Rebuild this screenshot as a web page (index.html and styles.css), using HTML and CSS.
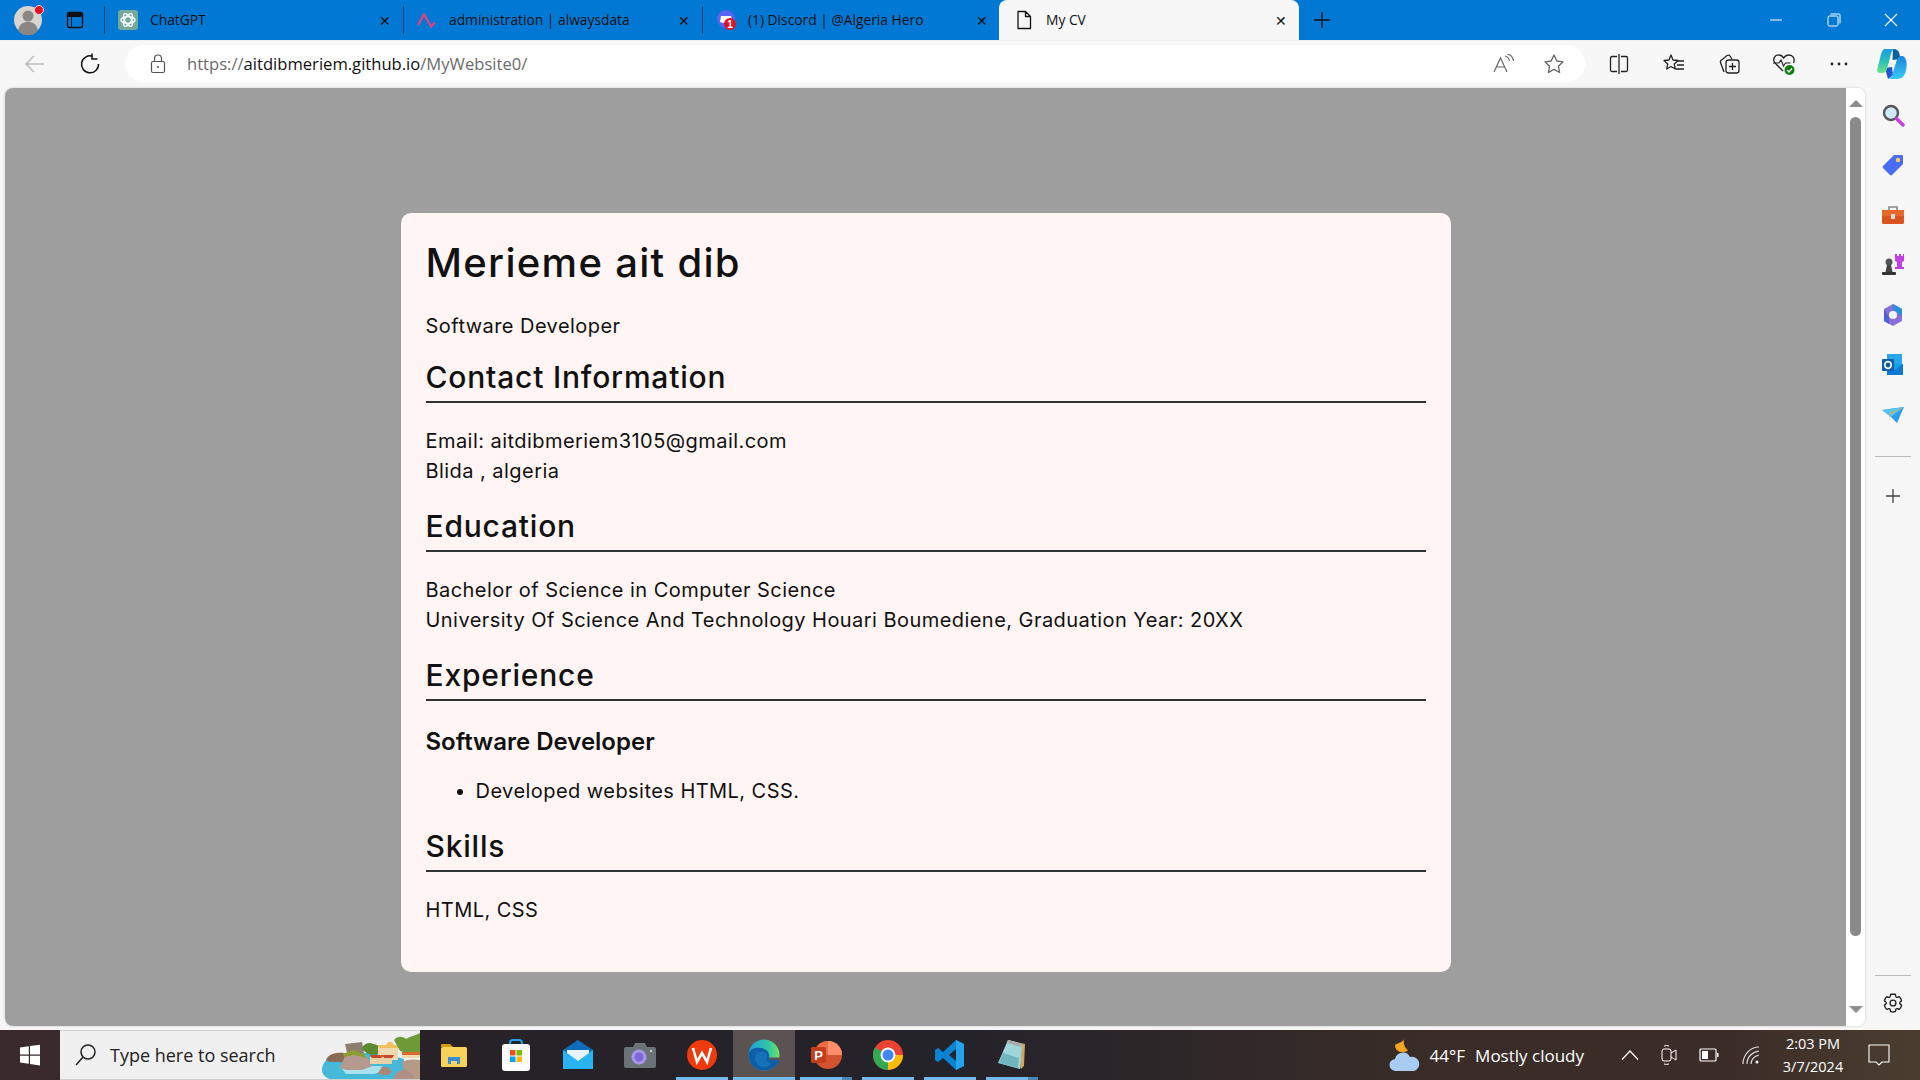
FILE: index.html
```html
<!DOCTYPE html>
<html lang="en">
<head>
  <meta charset="UTF-8" />
  <title>My CV</title>
  <link rel="stylesheet" href="styles.css">
</head>
<body>
  <div class="tabstrip">
    <div class="strip-start">
      <svg class="avatar" width="44" height="40" viewBox="0 0 44 40"><circle cx="28" cy="20" r="14" fill="#d8d4d0"/><circle cx="28" cy="16" r="5.5" fill="#8a8684"/><path d="M18 31c1-7 5-9 10-9s9 2 10 9a14 14 0 0 1-20 0z" fill="#8a8684"/><circle cx="39" cy="10" r="4.5" fill="#e81123" stroke="#f5d5d5"/></svg>
      <svg class="tabs-icon" width="20" height="20" viewBox="0 0 20 20"><rect x="2.5" y="2.5" width="15" height="15" rx="2" fill="none" stroke="#111" stroke-width="1.4"/><path d="M2.5 3h15v3.5h-15zM6.5 6v11" fill="#111" stroke="#111"/></svg>
    </div>
    <div class="tab">
      <svg width="20" height="20" viewBox="0 0 20 20"><rect width="20" height="20" rx="3" fill="#74aa9c"/><g fill="none" stroke="#fff" stroke-width="1.3"><ellipse cx="10" cy="10" rx="7" ry="3.4"/><ellipse cx="10" cy="10" rx="7" ry="3.4" transform="rotate(60 10 10)"/><ellipse cx="10" cy="10" rx="7" ry="3.4" transform="rotate(120 10 10)"/></g></svg>
      <span class="tab-title">ChatGPT</span><span class="tab-close">✕</span>
    </div>
    <div class="tab">
      <svg width="20" height="20" viewBox="0 0 20 20"><path d="M1 15 7 4.500l3 5 4 7 4-4" fill="none" stroke="#e8407f" stroke-width="2.200"/></svg>
      <span class="tab-title">administration | alwaysdata</span><span class="tab-close">✕</span>
    </div>
    <div class="tab tab-last">
      <svg width="22" height="22" viewBox="0 0 22 22"><circle cx="10" cy="10" r="9" fill="#5865f2"/><path d="M5 7h10l1 6-3 1-3-1-3 1-3-1z" fill="#fff"/><circle cx="14" cy="15" r="6" fill="#e81123"/><text x="14" y="18.500" class="badge-num">1</text></svg>
      <span class="tab-title">(1) Discord | @Algeria Hero</span><span class="tab-close">✕</span>
    </div>
    <div class="tab tab-active">
      <svg width="18" height="20" viewBox="0 0 18 20"><path d="M3 1.500h7.500L15.500 6.500V18.500H3z M10.500 1.500V6.500H15.500" fill="none" stroke="#111" stroke-width="1.300" stroke-linejoin="round"/></svg>
      <span class="tab-title">My CV</span><span class="tab-close">✕</span>
    </div>
    <svg class="new-tab" width="18" height="18" viewBox="0 0 18 18"><path d="M9 1v16M1 9h16" stroke="#111" stroke-width="1.300"/></svg>
    <div class="window-btns">
      <svg width="14" height="14" viewBox="0 0 14 14"><path d="M1 7h12" stroke="#fff"/></svg>
      <svg width="14" height="14" viewBox="0 0 14 14"><rect x="1" y="3" width="10" height="10" rx="1.500" fill="none" stroke="#fff"/><path d="M3.500 1H12a1 1 0 0 1 1 1v8.500" fill="none" stroke="#fff"/></svg>
      <svg width="14" height="14" viewBox="0 0 14 14"><path d="M1 1l12 12M13 1 1 13" stroke="#fff" stroke-width="1.100"/></svg>
    </div>
  </div>

  <div class="toolbar">
    <svg class="nav-back" width="22" height="22" viewBox="0 0 22 22"><path d="M20 11H2M10 3l-8 8 8 8" fill="none" stroke="#bdbdbd" stroke-width="1.500"/></svg>
    <svg class="nav-reload" width="22" height="22" viewBox="0 0 22 22"><path d="M13.500 3.200A8.500 8.500 0 1 0 19.500 11" fill="none" stroke="#111" stroke-width="1.500"/><path d="M13 .5v5.500h5.500" fill="none" stroke="#111" stroke-width="1.500"/></svg>
    <div class="address">
      <svg width="16" height="20" viewBox="0 0 16 20"><rect x="1.500" y="7.500" width="13" height="11" rx="1.500" fill="none" stroke="#555" stroke-width="1.200"/><path d="M4.500 7.500V4.500a3.500 3.500 0 0 1 7 0v3" fill="none" stroke="#555" stroke-width="1.200"/><circle cx="8" cy="13" r="1" fill="#555"/></svg>
      <div class="url"><span class="url-dim">https://</span>aitdibmeriem.github.io<span class="url-dim">/MyWebsite0/</span></div>
      <svg class="read-aloud" width="22" height="20" viewBox="0 0 22 20"><path d="M1 18 7.500 4 14 18M3.500 13h8" fill="none" stroke="#666" stroke-width="1.200"/><path d="M12 2c2.500.5 4 2.500 4.500 5M14.500 0c3 .8 5.500 3 6 7" fill="none" stroke="#666" stroke-width="1.200"/></svg>
      <svg width="22" height="22" viewBox="0 0 22 22"><path d="M11 2l2.800 6 6.200.8-4.600 4.400 1.200 6.300L11 16.400 5.400 19.500l1.200-6.300L2 8.800 8.200 8z" fill="none" stroke="#666" stroke-width="1.300" stroke-linejoin="round"/></svg>
    </div>
    <div class="tool-icons">
      <svg width="20" height="20" viewBox="0 0 20 20"><path d="M8 2.500H3A1.500 1.500 0 0 0 1.500 4v12A1.500 1.500 0 0 0 3 17.500h5M12 2.500h5A1.500 1.500 0 0 1 18.500 4v12a1.500 1.500 0 0 1-1.500 1.500h-5M10 0v20" fill="none" stroke="#222" stroke-width="1.300"/></svg>
      <svg width="22" height="22" viewBox="0 0 22 22"><path d="M8 2l2 5 5 .5-3.700 3.500 1 5L8 13.500 3.700 16l1-5L1 7.500 6 7z" fill="none" stroke="#222" stroke-width="1.300" stroke-linejoin="round"/><path d="M14 8h7M14 12h7M13 16h8" stroke="#222" stroke-width="1.300"/></svg>
      <svg width="22" height="22" viewBox="0 0 22 22"><path d="M6 19 2.500 9.500a2 2 0 0 1 1.200-2.600L9 2.500c1-.5 2.500-.5 3 .5l2 3" fill="none" stroke="#222" stroke-width="1.300"/><rect x="8" y="7" width="13" height="13" rx="2.500" fill="none" stroke="#222" stroke-width="1.300"/><path d="M14.500 10v7M11 13.500h7" stroke="#222" stroke-width="1.300"/></svg>
      <svg width="24" height="24" viewBox="0 0 24 24"><path d="M11 19 3 11C0 7 3 2.500 7 3c2 0 3.500 1 4.500 3C13 4 15 3 16.500 3c4-.3 7 3.500 5 8" fill="none" stroke="#222" stroke-width="1.300"/><path d="M1 11h6l2-3 2.500 6 2-3h5" fill="none" stroke="#222" stroke-width="1.100"/><circle cx="17.500" cy="18" r="5" fill="#107c10"/><path d="M15 18l2 2 3-3.500" fill="none" stroke="#fff" stroke-width="1.200"/></svg>
      <svg width="20" height="20" viewBox="0 0 20 20"><g fill="#222"><circle cx="3" cy="10" r="1.400"/><circle cx="10" cy="10" r="1.400"/><circle cx="17" cy="10" r="1.400"/></g></svg>
    </div>
    <svg class="copilot" width="32" height="30" viewBox="0 0 30 30">
      <defs>
        <linearGradient id="copA" x1="0" y1="0" x2="0" y2="1"><stop offset="0" stop-color="#1b9be8"/><stop offset=".55" stop-color="#2cc4b4"/><stop offset="1" stop-color="#6ee28a"/></linearGradient>
        <linearGradient id="copB" x1="0" y1="0" x2="0" y2="1"><stop offset="0" stop-color="#1a86e0"/><stop offset="1" stop-color="#38c8f6"/></linearGradient>
      </defs>
      <path d="M16 0c4 0 6 2 6.500 5l1 5-8 1z" fill="#0b5f9e"/>
      <path d="M8 19l7-1 1 8-5 4z" fill="#2154d0"/>
      <path d="M8 0h11c-3 0-4.500 2-5 5l-4 15c-.8 3-2.500 4-5 4H3c-2 0-3.500-2-2.500-4.500L4 5C5 2 6 0 8 0z" fill="url(#copA)"/>
      <path d="M19.500 30H10c3 0 4.500-2 5.500-5l4-13c.8-3 2.500-5 5-5h.5c2 0 3.500 2 4 4 1 3 1 7-.5 12-1.500 5-4 7-9 7z" fill="url(#copB)"/>
    </svg>
  </div>

  <div class="main">
    <div class="viewport">
      <div class="page">
        <div class="card">
          <h1>Merieme ait dib</h1>
          <p>Software Developer</p>
          <h2 class="first-head">Contact Information</h2>
          <p>Email: aitdibmeriem3105@gmail.com<br>Blida , algeria</p>
          <h2>Education</h2>
          <p>Bachelor of Science in Computer Science<br>University Of Science And Technology Houari Boumediene, Graduation Year: 20XX</p>
          <h2>Experience</h2>
          <h3>Software Developer</h3>
          <ul>
            <li>Developed websites HTML, CSS.</li>
          </ul>
          <h2>Skills</h2>
          <p>HTML, CSS</p>
        </div>
      </div>
      <div class="scrollbar">
        <div class="arrow-up"></div>
        <div class="thumb"></div>
        <div class="arrow-down"></div>
      </div>
    </div>
    <div class="sidebar">
      <svg width="24" height="24" viewBox="0 0 24 24"><circle cx="10" cy="10" r="7" fill="#cfe8f7" stroke="#555" stroke-width="2.400"/><path d="M15.500 15.500 22 22" stroke="#c83fe0" stroke-width="3.500" stroke-linecap="round"/></svg>
      <svg width="24" height="24" viewBox="0 0 24 24"><path d="M13 2h8a1 1 0 0 1 1 1v8L11 22a1.500 1.500 0 0 1-2 0L2 15a1.500 1.500 0 0 1 0-2z" fill="#4a6cf7"/><circle cx="17" cy="7" r="2.200" fill="#f7d154"/></svg>
      <svg width="24" height="24" viewBox="0 0 24 24"><path d="M8 7V4h8v3" fill="none" stroke="#888" stroke-width="1.600"/><rect x="1" y="7" width="22" height="14" rx="1.500" fill="#d9541e"/><rect x="1" y="7" width="22" height="6" fill="#e8672a"/><rect x="10" y="11" width="4" height="5" fill="#ddd"/></svg>
      <svg width="24" height="24" viewBox="0 0 24 24"><circle cx="8" cy="9" r="3.500" fill="#555"/><path d="M6 12h4l1.500 7h-7z" fill="#444"/><rect x="1" y="19" width="14" height="3" rx="1" fill="#333"/><path d="M14 1h2v2h2V1h2v2h2V1h1v7l-2 1v5h2v2H14v-2h2V9l-2-1z" fill="#c23fe0"/></svg>
      <svg width="24" height="24" viewBox="0 0 24 24"><path d="M12 1l9 5v12l-9 5-9-5V6z" fill="#8a6fd8"/><path d="M12 1l9 5v7l-5-3-4-2z" fill="#2b8fe0"/><path d="M3 6v12l5 3v-7z" fill="#4b63d8"/><circle cx="12" cy="12" r="4" fill="#f7f7f7"/></svg>
      <svg width="24" height="24" viewBox="0 0 24 24"><rect x="6" y="1" width="15" height="12" fill="#28a8ea"/><path d="M6 11h16v11H6z" fill="#14a0e8"/><path d="M6 11l8 6 8-6v11H6z" fill="#0f78d4"/><rect x="1" y="6" width="12" height="12" rx="1" fill="#0f5fb0"/><circle cx="7" cy="12" r="3.300" fill="none" stroke="#fff" stroke-width="1.700"/></svg>
      <svg width="24" height="24" viewBox="0 0 24 24"><path d="M1 7l22-3-7 16-6-6z" fill="#2b9cf2"/><path d="M1 7l9 7 13-10z" fill="#59c3f7"/><path d="M8 12l15-8-14 6-1 8z" fill="#f0a82a"/></svg>
      <div class="side-rule side-rule-mid"></div>
      <svg class="side-add" width="18" height="18" viewBox="0 0 18 18"><path d="M9 2v14M2 9h14" stroke="#444" stroke-width="1.300"/></svg>
      <div class="side-rule side-rule-low"></div>
      <svg class="gear" width="22" height="22" viewBox="0 0 24 24"><path d="M12.012 2.250c.734.008 1.465.093 2.182.253a.75.75 0 0 1 .582.649l.17 1.527a1.384 1.384 0 0 0 1.927 1.116l1.400-.615a.75.75 0 0 1 .85.174 9.793 9.793 0 0 1 2.205 3.792.75.75 0 0 1-.272.825l-1.241.916a1.380 1.380 0 0 0 0 2.226l1.243.915a.75.75 0 0 1 .272.826 9.798 9.798 0 0 1-2.204 3.792.75.75 0 0 1-.849.175l-1.406-.617a1.380 1.380 0 0 0-1.926 1.114l-.17 1.526a.75.75 0 0 1-.571.647 9.518 9.518 0 0 1-4.406 0 .75.75 0 0 1-.572-.647l-.169-1.524a1.382 1.382 0 0 0-1.925-1.110l-1.406.616a.75.75 0 0 1-.85-.175 9.798 9.798 0 0 1-2.203-3.796.75.75 0 0 1 .272-.826l1.243-.916a1.380 1.380 0 0 0 0-2.226l-1.243-.914a.75.75 0 0 1-.272-.826 9.793 9.793 0 0 1 2.205-3.792.75.75 0 0 1 .85-.174l1.400.615a1.387 1.387 0 0 0 1.930-1.118l.17-1.526a.75.75 0 0 1 .583-.650c.717-.159 1.450-.243 2.201-.252z" fill="none" stroke="#222" stroke-width="1.500"/><circle cx="12" cy="12" r="3.200" fill="none" stroke="#222" stroke-width="1.500"/></svg>
    </div>
  </div>

  <div class="taskbar">
    <div class="start">
      <svg width="24" height="24" viewBox="0 0 24 24"><path d="M2 4.500 10.800 3.300v8.200H2zM12 3.100 22 1.700v9.800H12zM2 12.700h8.800v8.100L2 19.600zM12 12.700h10v9.700l-10-1.400z" fill="#fff"/></svg>
    </div>
    <div class="search">
      <svg width="24" height="24" viewBox="0 0 24 24"><circle cx="14" cy="9" r="7" fill="none" stroke="#222" stroke-width="1.500"/><path d="M9 14 2 22" stroke="#222" stroke-width="1.500"/></svg>
      <span class="search-text">Type here to search</span>
      <svg class="island" width="110" height="48" viewBox="0 1 110 48">
        <path d="M12 40c0-9 10-17 22-17h40l20 6v21H22C16 48 12 45 12 40z" fill="#47b9d8"/>
        <path d="M30 36h40l10 3-16 5H36z" fill="#a9e2ee"/>
        <path d="M16 30c2-6 10-8 18-7l3 9H20z" fill="#8a6a56"/>
        <path d="M35 14l17-2 2 11H37z" fill="#8d7f70"/>
        <path d="M30 38l5-12 10-4 12 5 5 9-10 4H36z" fill="#b49a8e"/>
        <path d="M33 24l10-4 11 4 3 4-13-3-10 2z" fill="#8e9c30"/>
        <path d="M52 18c2-5 8-6 11-4 5 0 8 4 7 9-4 3-14 3-18-5z" fill="#5c8a30"/>
        <path d="M68 17h20v13H68z" fill="#efd9ae"/>
        <path d="M68 15h8l2-3h4l2 3h8l-2 3H70z" fill="#f0c060"/>
        <path d="M70 25h14l-2 3H72z" fill="#d2542e"/>
        <path d="M60 27h22v7H60z" fill="#e8d0a8"/>
        <path d="M60 25h10l2 3H62zM74 25h10l-2 3H74z" fill="#c9482a"/>
        <path d="M84 10c3-4 9-4 12-1 4-3 9-3 14-6v20H96l-6-2z" fill="#6f9a38"/>
        <path d="M92 24h18v4H92z" fill="#efd9ae"/>
        <path d="M92 22h18v3H92z" fill="#d96a32"/>
        <path d="M92 32c5-3 12-3 18-2v20H96z" fill="#b59a86"/>
        <path d="M68 43l4-6h6l4 5-4 3h-7z" fill="#a88878"/>
        <path d="M82 50l5-8 8-3 7 5 2 6z" fill="#b08f86"/>
      </svg>
    </div>
    <div class="task-apps">
      <div class="app">
        <svg width="28" height="26" viewBox="0 0 28 26"><path d="M1 3a1 1 0 0 1 1-1h8l3 3H1z" fill="#d39c12"/><rect x="1" y="5" width="26" height="20" rx="1.500" fill="#f7d35c"/><path d="M8 22v-7h12v7h-3v-3h-6v3z" fill="#3a8ed8"/></svg>
      </div>
      <div class="app">
        <svg width="30" height="34" viewBox="0 0 30 34"><path d="M9 8V5a3 3 0 0 1 3-3h6a3 3 0 0 1 3 3v3" fill="none" stroke="#22a3e8" stroke-width="2"/><rect x="1" y="6" width="28" height="27" rx="3" fill="#fbfbfb"/><rect x="9" y="12" width="5.500" height="5.500" fill="#f25022"/><rect x="15.500" y="12" width="5.500" height="5.500" fill="#7fba00"/><rect x="9" y="18.500" width="5.500" height="5.500" fill="#00a4ef"/><rect x="15.500" y="18.500" width="5.500" height="5.500" fill="#ffb900"/></svg>
      </div>
      <div class="app">
        <svg width="32" height="30" viewBox="0 0 32 30"><path d="M1 10 16 0l15 10v19H1z" fill="#0f6cbd"/><path d="M5 10h22v8L16 24 5 18z" fill="#e8f4fb"/><path d="M1 10v19h30V10L16 21z" fill="#28b4f0"/></svg>
      </div>
      <div class="app">
        <svg width="32" height="28" viewBox="0 0 32 28"><path d="M2 6h7l2-4h10l2 4h7a2 2 0 0 1 2 2v17a2 2 0 0 1-2 2H2a2 2 0 0 1-2-2V8a2 2 0 0 1 2-2z" fill="#6c7378"/><circle cx="15" cy="16" r="7.500" fill="#a894e8"/><circle cx="15" cy="16" r="4.500" fill="#7a6ad8"/><circle cx="27" cy="10" r="1.200" fill="#ccc"/></svg>
      </div>
      <div class="app app-open">
        <svg width="30" height="30" viewBox="0 0 30 30"><circle cx="15" cy="15" r="15" fill="#ee3a0c"/><path d="M6 8l4 14 5-9 5 9 4-14" fill="none" stroke="#fff" stroke-width="2.600"/></svg>
      </div>
      <div class="app app-open app-active">
        <svg width="32" height="32" viewBox="0 0 32 32">
          <defs><linearGradient id="edgeTop" x1="0" y1="0" x2="1" y2="0"><stop offset="0" stop-color="#1b9de2"/><stop offset=".6" stop-color="#2ec4a8"/><stop offset="1" stop-color="#6fe06a"/></linearGradient></defs>
          <circle cx="16" cy="16" r="15.500" fill="url(#edgeTop)"/>
          <path d="M.5 16C1 10 7 8 13 9c6 1 9 5 8 9-.5 2 1 3 3 3h7.500c-1 3-3 6-6.500 8-3 2-6 2.500-9 2.500C7 31.500 .5 25 .5 16z" fill="#0f5ea8"/>
          <path d="M7 18c0-3 4-6 8-5 3 .5 5 3 4 6-1 3 1 5 4 5.500-3 3-6 4-9 3.500-4-1-7-5-7-10z" fill="#1672b8"/>
          <path d="M21 18.500H31.500c-.1 1-.3 1.600-.5 2.500h-7c-2 0-3.500-.8-3-2.500z" fill="#5a5352"/>
        </svg>
      </div>
      <div class="app app-open app-split">
        <svg width="32" height="30" viewBox="0 0 32 30"><circle cx="18" cy="15" r="14" fill="#d35230"/><path d="M18 1A14 14 0 0 0 4 15h14z" fill="#ed6c47"/><path d="M18 1a14 14 0 0 1 14 14H18z" fill="#ff8f6b"/><rect x="1" y="7" width="15" height="16" rx="1.500" fill="#c43e1c"/><text x="8.500" y="20" class="ppt-letter">P</text></svg>
      </div>
      <div class="app app-open">
        <svg width="30" height="30" viewBox="0 0 30 30"><circle cx="15" cy="15" r="15" fill="#ea4335"/><path d="M15 15 2 7.500A15 15 0 0 0 15 30z" fill="#34a853"/><path d="M15 15h15A15 15 0 0 1 15 30z" fill="#fbbc05"/><circle cx="15" cy="15" r="7.500" fill="#fff"/><circle cx="15" cy="15" r="5.500" fill="#4285f4"/></svg>
      </div>
      <div class="app app-open">
        <svg width="30" height="30" viewBox="0 0 30 30"><path d="M21 0l8 4v22l-8 4-13-12-5 4-3-2V10l3-2 5 4z" fill="#0a84d0"/><path d="M21 0l8 4v22l-8 4z" fill="#24a4ec"/><path d="M21 9l-7 6 7 6z" fill="#26272c"/></svg>
      </div>
      <div class="app app-open app-split">
        <svg width="28" height="30" viewBox="0 0 28 30"><path d="M10 0l17 4-1 22-3 3z" fill="#c9a868"/><path d="M10 0l14 4-2 25L0 23z" fill="#9fd6da"/><path d="M10 0l14 4-1 3L8.500 3z" fill="#a9a9a9"/><path d="M5 13l16 5-1 10L1 23z" fill="#6fb6c0"/></svg>
      </div>
    </div>
    <div class="tray">
      <svg width="32" height="34" viewBox="0 0 32 34"><path d="M15 1c-1 3-6 4-9 6 0 4 3 8 9 7 2 0 3-1 4-2-3-2-5-6-4-11z" fill="#f2a51e"/><path d="M7 33a6 6 0 0 1-1-12 8 8 0 0 1 15-2 7 7 0 0 1 4 14z" fill="#a8ccf2"/></svg>
      <span class="weather">44°F</span>
      <span class="weather weather-text">Mostly cloudy</span>
      <svg class="tray-chev" width="18" height="12" viewBox="0 0 18 12"><path d="M1 10.500 9 2l8 8.500" fill="none" stroke="#fff" stroke-width="1.200"/></svg>
      <svg class="tray-icon" width="16" height="22" viewBox="0 0 16 22"><rect x="1" y="5" width="9" height="12" rx="2" fill="none" stroke="#fff"/><path d="M10 9l5-3v10l-5-3" fill="none" stroke="#fff"/><path d="M3 2a8 8 0 0 1 5 0M3 20a8 8 0 0 0 5 0" stroke="#fff" fill="none"/></svg>
      <svg class="tray-icon" width="20" height="14" viewBox="0 0 20 14"><rect x="1" y="1" width="16" height="12" rx="1" fill="none" stroke="#fff" stroke-width="1.200"/><rect x="3" y="3" width="6" height="8" fill="#fff"/><rect x="18" y="5" width="1.500" height="4" fill="#fff"/></svg>
      <svg class="tray-icon" width="20" height="20" viewBox="0 0 20 20"><path d="M2 19C2 10 9 2 18 2M6 19c0-7 5-12 12-13M10 19c0-4 3-8 8-9" fill="none" stroke="#ddd" stroke-width="1.200"/><circle cx="16" cy="17" r="1.500" fill="#fff"/></svg>
      <div class="clock"><div>2:03 PM</div><div>3/7/2024</div></div>
      <svg class="notify" width="22" height="22" viewBox="0 0 22 22"><path d="M1 1h20v17h-7l-3 3-3-3H1z" fill="none" stroke="#fff" stroke-width="1.100"/></svg>
    </div>
  </div>
</body>
</html>
```

FILE: styles.css
```css
* {
  box-sizing: border-box;
}
body {
  margin: 0;
  width: 1920px;
  height: 1080px;
  overflow: hidden;
  display: flex;
  flex-direction: column;
  background: #f7f7f7;
  font-family: "Open Sans", "Noto Sans", sans-serif;
}
svg {
  flex: none;
  display: block;
}

/* tab strip */
.tabstrip {
  height: 40px;
  flex: none;
  display: flex;
  align-items: center;
  background: #0078d4;
  color: #111;
}
.strip-start {
  width: 104px;
  display: flex;
  align-items: center;
}
.tabs-icon {
  margin-left: 21px;
}
.tab {
  width: 299px;
  height: 40px;
  display: flex;
  align-items: center;
  gap: 12px;
  padding: 0 11px 0 14px;
  font-size: 13.800px;
  background: linear-gradient(#10426b, #10426b) no-repeat left center / 1px 28px;
}
.tab-last {
  width: 298px;
  gap: 10px;
}
.tab-active {
  width: 300px;
  margin-left: -1px;
  background: #f7f7f7;
  border-radius: 8px 8px 0 0;
  padding-left: 16px;
  gap: 13px;
}
.tab-title {
  flex: 1;
  white-space: nowrap;
  padding-bottom: 2px;
}
.tab-close {
  font-size: 14px;
  width: 14px;
  text-align: center;
}
.badge-num {
  font: bold 10px "Liberation Sans", sans-serif;
  fill: #fff;
  text-anchor: middle;
}
.new-tab {
  margin-left: 14px;
}
.window-btns {
  margin-left: auto;
  width: 151px;
  padding-right: 22px;
  display: flex;
  justify-content: space-between;
  align-items: center;
}

/* toolbar */
.toolbar {
  height: 48px;
  flex: none;
  display: flex;
  align-items: center;
  background: #f7f7f7;
  padding: 0 0 2px 24px;
  border-top: 1px solid #f0f0f0;
}
.nav-reload {
  margin-left: 33px;
}
.address {
  width: 1460px;
  height: 37px;
  margin-left: 24px;
  padding: 0 20px 0 25px;
  display: flex;
  align-items: center;
  background: #fff;
  border-radius: 19px;
}
.url {
  flex: 1;
  margin-left: 21px;
  font-size: 16.600px;
  color: #111;
  white-space: nowrap;
}
.url-dim {
  color: #6b6b6b;
}
.read-aloud {
  margin-right: 28px;
}
.tool-icons {
  width: 275px;
  margin-left: 6.500px;
  display: grid;
  grid-template-columns: repeat(5, 55px);
  justify-items: center;
  align-items: center;
}
.copilot {
  margin-left: 9.500px;
}

/* main area */
.main {
  flex: 1;
  min-height: 0;
  display: flex;
}
.viewport {
  flex: none;
  width: 1860px;
  margin: 0 0 4px 5px;
  display: flex;
  background: #fff;
  border-radius: 8px;
  box-shadow: 0 0 3px rgba(0, 0, 0, 0.18);
  overflow: hidden;
}
.page {
  flex: 1;
  background: #9e9e9e;
  padding-top: 125px;
  display: flex;
  justify-content: center;
  align-items: flex-start;
}
.card {
  width: 1050px;
  padding: 25px 25px 47px;
  background: #fff5f4;
  border-radius: 10px;
  color: #111;
  font-family: Inter, "Open Sans", sans-serif;
  font-size: 20px;
  line-height: 30px;
  letter-spacing: 0.450px;
}
.card h1 {
  margin: 0 0 23px;
  font-size: 40px;
  line-height: 50px;
  font-weight: 500;
  letter-spacing: 1.300px;
}
.card h2 {
  margin: 22px 0 23px;
  padding-bottom: 6px;
  border-bottom: 2px solid #333;
  font-size: 30px;
  line-height: 36px;
  font-weight: 500;
  letter-spacing: 0.800px;
}
.card h2.first-head {
  margin-top: 18px;
}
.card h3 {
  margin: 27px 0 20px;
  font-size: 24px;
  line-height: 28px;
  font-weight: 600;
  letter-spacing: 0;
}
.card p {
  margin: 0;
}
.card ul {
  margin: 0;
  padding-left: 50px;
}
.scrollbar {
  width: 19px;
  display: flex;
  flex-direction: column;
  align-items: center;
  padding: 12px 0 13px;
  background: #fff;
}
.arrow-up {
  border: 7px solid transparent;
  border-top: none;
  border-bottom: 7px solid #8d8d8d;
}
.arrow-down {
  border: 7px solid transparent;
  border-bottom: none;
  border-top: 7px solid #8d8d8d;
  margin-top: auto;
}
.thumb {
  width: 11px;
  height: 819px;
  margin-top: 10px;
  background: #8a8a8a;
  border-radius: 6px;
}

/* sidebar */
.sidebar {
  flex: 1;
  display: flex;
  flex-direction: column;
  align-items: center;
  padding-top: 15px;
  gap: 26px;
}
.side-rule {
  width: 36px;
  height: 1px;
  background: #bbb;
}
.side-rule-mid {
  margin-top: 3px;
}
.side-add {
  margin-top: 4px;
}
.side-rule-low {
  margin-top: auto;
  margin-bottom: -10px;
}
.gear {
  margin-bottom: 16px;
}

/* taskbar */
.taskbar {
  height: 50px;
  flex: none;
  display: flex;
  color: #fff;
  background: linear-gradient(90deg, #2b2226, #24222a 50%, #3a2d27 75%, #3b2c28 90%, #4a3e30);
}
.start {
  width: 60px;
  display: flex;
  align-items: center;
  justify-content: center;
  background: #3a2a2c;
}
.search {
  width: 360px;
  display: flex;
  align-items: center;
  padding-left: 14px;
  background: #f0f0f0;
  color: #222;
  border-top: 1px solid #cfcfcf;
  border-bottom: 1px solid #cfcfcf;
  overflow: hidden;
}
.search-text {
  flex: 1;
  margin-left: 12px;
  font-size: 18px;
  white-space: nowrap;
}
.task-apps {
  display: flex;
  margin-left: 3px;
}
.app {
  width: 62px;
  display: flex;
  align-items: center;
  justify-content: center;
  position: relative;
}
.app-open::after {
  content: "";
  position: absolute;
  left: 5px;
  right: 5px;
  bottom: 0;
  height: 3px;
  background: #76b9ed;
}
.app-split::after {
  background: linear-gradient(90deg, #76b9ed 80%, #4c86b4 80%);
}
.app-active {
  background: #5a5352;
}
.app-active::after {
  left: 0;
  right: 0;
}
.ppt-letter {
  font: bold 13px "Liberation Sans", sans-serif;
  fill: #fff;
  text-anchor: middle;
}
.tray {
  margin-left: auto;
  display: flex;
  align-items: center;
  padding-right: 30px;
}
.weather {
  margin-left: 9px;
  font-size: 17px;
  white-space: nowrap;
}
.weather-text {
  margin-left: 10px;
}
.tray-chev {
  margin-left: 37px;
}
.tray-icon {
  margin-left: 22px;
}
.clock {
  width: 90px;
  margin-left: 7px;
  text-align: center;
  font-size: 14.500px;
  line-height: 23px;
}
.notify {
  margin-left: 10px;
}
```
